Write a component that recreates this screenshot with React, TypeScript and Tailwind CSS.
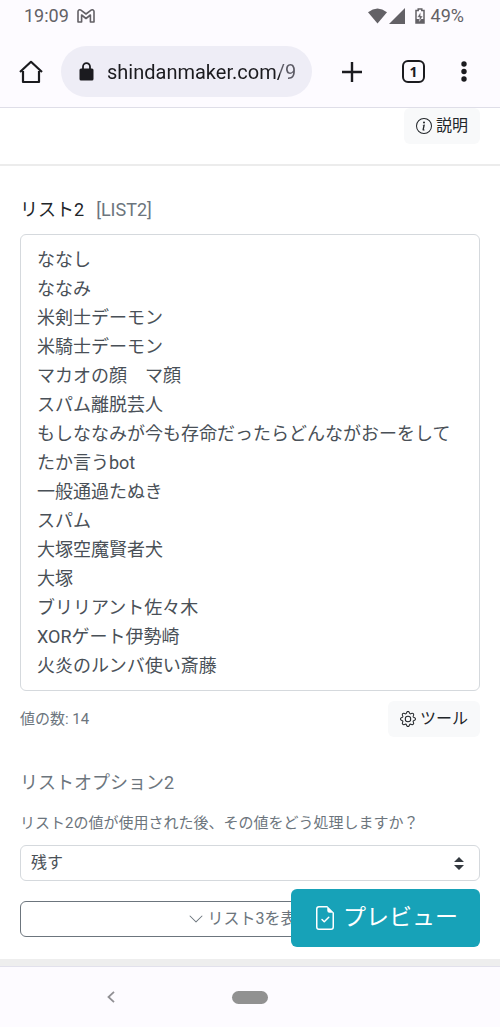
import React, { useState } from 'react';
import { BsChevronDown, BsFileEarmarkCheck, BsGear, BsInfoCircle } from 'react-icons/bs';

const LIST_VALUES = [
  'ななし',
  'ななみ',
  '米剣士デーモン',
  '米騎士デーモン',
  'マカオの顔　マ顔',
  'スパム離脱芸人',
  'もしななみが今も存命だったらどんながおーをしてたか言うbot',
  '一般通過たぬき',
  'スパム',
  '大塚空魔賢者犬',
  '大塚',
  'ブリリアント佐々木',
  'XORゲート伊勢崎',
  '火炎のルンバ使い斎藤'
];

const StatusBar: React.FC = () => (
  <div className="flex h-8 items-center justify-between pl-6 pr-9 text-lg leading-none text-[#636166]">
    <div className="flex items-center gap-2">
      <span>19:09</span>
      <svg width="18" height="14" viewBox="0 0 18 14" fill="none" stroke="currentColor" strokeWidth="1.6" strokeLinejoin="round" aria-label="Gmail">
        <path d="M1 2.6C1 1 2.600.3 3.900 1.200L9 5l5.100-3.800C15.400.3 17 1 17 2.600V13h-3.600V6L9 9.500 4.600 6v7H1z" />
      </svg>
    </div>
    <div className="flex items-center">
      <svg width="19" height="16" viewBox="0 0 19 16" fill="currentColor" aria-label="Wi-Fi">
        <path d="M9.500 15.500 0 4.200Q9.500-3.200 19 4.200z" />
      </svg>
      <svg width="16" height="16" viewBox="0 0 16 16" fill="currentColor" className="ml-0.5" aria-label="Signal">
        <path d="M16 0v16H0z" />
      </svg>
      <svg width="10" height="16" viewBox="0 0 10 16" className="ml-2.5 mr-1.5" aria-label="Battery">
        <path d="M3.200 1h3.600v1.500H9V15H1V2.500h2.200z" fill="none" stroke="currentColor" strokeWidth="1.500" />
        <path d="M1 11h8v4H1z" fill="currentColor" />
        <path d="M5.700 4 2.200 9.300h2.200V13.300L7.900 8H5.700z" fill="currentColor" stroke="#fdfbff" strokeWidth=".5" />
      </svg>
      <span>49%</span>
    </div>
  </div>
);

const AddressBar: React.FC = () => (
  <div className="flex items-center pb-2.5 pl-[19px] pr-[33px] pt-3.5 text-[#1b1b1f]">
    <button type="button" aria-label="ホーム">
      <svg width="24" height="24" viewBox="0 0 24 24" fill="none" stroke="currentColor" strokeWidth="2.200" strokeLinejoin="round">
        <path d="M4 11v11h16V11M1 12 12 1.800 23 12" />
      </svg>
    </button>
    <label className="ml-[18px] flex h-[51px] min-w-0 flex-1 items-center rounded-full bg-[#eeedf6] pl-[18px] pr-3">
      <svg width="15" height="19" viewBox="0 0 15 19" className="shrink-0" aria-hidden="true">
        <path d="M4 8V4.700a3.500 3.500 0 0 1 7 0V8" fill="none" stroke="currentColor" strokeWidth="1.800" />
        <rect x=".5" y="6.500" width="14" height="12" rx="1.500" fill="currentColor" />
      </svg>
      <input
        type="text"
        readOnly
        value="shindanmaker.com/9"
        aria-label="アドレス"
        className="ml-[13px] w-full min-w-0 bg-[linear-gradient(90deg,#1b1b1f_173px,#5a5963_173px)] bg-clip-text text-xl text-transparent outline-none"
      />
    </label>
    <button type="button" aria-label="新しいタブ" className="ml-[30px]">
      <svg width="20" height="20" viewBox="0 0 20 20" fill="none" stroke="currentColor" strokeWidth="2.400">
        <path d="M10 0v20M0 10h20" />
      </svg>
    </button>
    <button
      type="button"
      aria-label="タブ一覧"
      className="ml-10 flex size-[23px] items-center justify-center rounded-md border-2 border-[#1b1b1f] font-['Open_Sans'] text-sm font-bold leading-none"
    >
      1
    </button>
    <button type="button" aria-label="メニュー" className="ml-9">
      <svg width="6" height="21" viewBox="0 0 6 21" fill="currentColor">
        <circle cx="3" cy="3" r="2.700" />
        <circle cx="3" cy="10.500" r="2.700" />
        <circle cx="3" cy="18" r="2.700" />
      </svg>
    </button>
  </div>
);

const SystemNav: React.FC = () => (
  <nav className="grid h-[61px] grid-cols-[1fr_36px_1fr] items-center border-t border-[#e2e1ec] bg-[#fdfbff] text-[#919094]">
    <div className="flex justify-center pr-2.5">
      <button type="button" aria-label="戻る">
        <svg width="8" height="12" viewBox="0 0 8 12" fill="none" stroke="currentColor" strokeWidth="1.800">
          <path d="M7 .8 1.500 6 7 11.200" />
        </svg>
      </button>
    </div>
    <button type="button" aria-label="ホーム画面" className="h-[13px] rounded-full bg-[#919191]" />
  </nav>
);

const App: React.FC = () => {
  const [values, setValues] = useState(LIST_VALUES.join('\n'));
  const count = values.split('\n').filter(Boolean).length;

  return (
    <div
      lang="ja"
      className="flex min-h-screen flex-col bg-white font-[Roboto,'Noto_Sans_CJK_JP',sans-serif] text-[#212529]"
    >
      <header className="border-b border-[#dfdee8] bg-[#fdfbff]">
        <StatusBar />
        <AddressBar />
      </header>

      <main className="relative flex-1 border-b-[7px] border-[#eeeeee]">
        <div className="flex justify-end border-b-2 border-[#ececec] px-5 pb-5">
          <button type="button" className="flex h-9 items-center gap-1 rounded-md bg-[#f8f9fa] px-3">
            <BsInfoCircle size={16} />
            説明
          </button>
        </div>

        <form className="px-5 pb-5" onSubmit={(e) => e.preventDefault()}>
          <label htmlFor="list2" className="block pt-7 text-lg leading-8">
            リスト2
            <span className="ml-3 text-[#6c757d]">[LIST2]</span>
          </label>
          <textarea
            id="list2"
            rows={15}
            value={values}
            onChange={(e) => setValues(e.target.value)}
            className="mt-2 block w-full resize-none overflow-hidden rounded-md border border-[#d5d9dd] px-4 pb-2.5 pt-2.5 text-lg leading-[29px] text-[#495057] outline-none"
          />

          <div className="mt-2.5 flex items-center justify-between">
            <span className="text-[15px] text-[#6c757d]">値の数: {count}</span>
            <button type="button" className="flex h-9 items-center gap-1 rounded-md bg-[#f8f9fa] px-3">
              <BsGear size={16} />
              ツール
            </button>
          </div>

          <label htmlFor="option2" className="mt-[30px] block text-lg leading-8 text-[#6c757d]">
            リストオプション2
          </label>
          <p id="option2-help" className="mt-3 text-[15px] leading-6 text-[#6c757d]">
            リスト2の値が使用された後、その値をどう処理しますか？
          </p>
          <div className="relative mt-2.5">
            <select
              id="option2"
              aria-describedby="option2-help"
              className="block h-9 w-full appearance-none rounded-md border border-[#d5d9dd] bg-white px-2.5 text-base text-[#495057]"
            >
              <option>残す</option>
            </select>
            <svg
              width="10"
              height="13"
              viewBox="0 0 10 13"
              fill="#343a40"
              aria-hidden="true"
              className="pointer-events-none absolute right-4 top-3"
            >
              <path d="M5 0 10 5H0zM5 13 0 8h10z" />
            </svg>
          </div>

          <button
            type="button"
            className="mt-5 flex h-9 w-full items-center justify-center gap-1 rounded-md border border-[#6c757d] text-[#6c757d]"
          >
            <BsChevronDown size={16} />
            リスト3を表示
          </button>
        </form>

        {/* stays above the form */}
        <button
          type="button"
          className="absolute bottom-3 right-5 flex h-[58px] items-center gap-1.5 rounded-md bg-[#17a2b8] px-[22px] text-[23px] text-white"
        >
          <BsFileEarmarkCheck size={24} />
          プレビュー
        </button>
      </main>

      <SystemNav />
    </div>
  );
};

export default App;
